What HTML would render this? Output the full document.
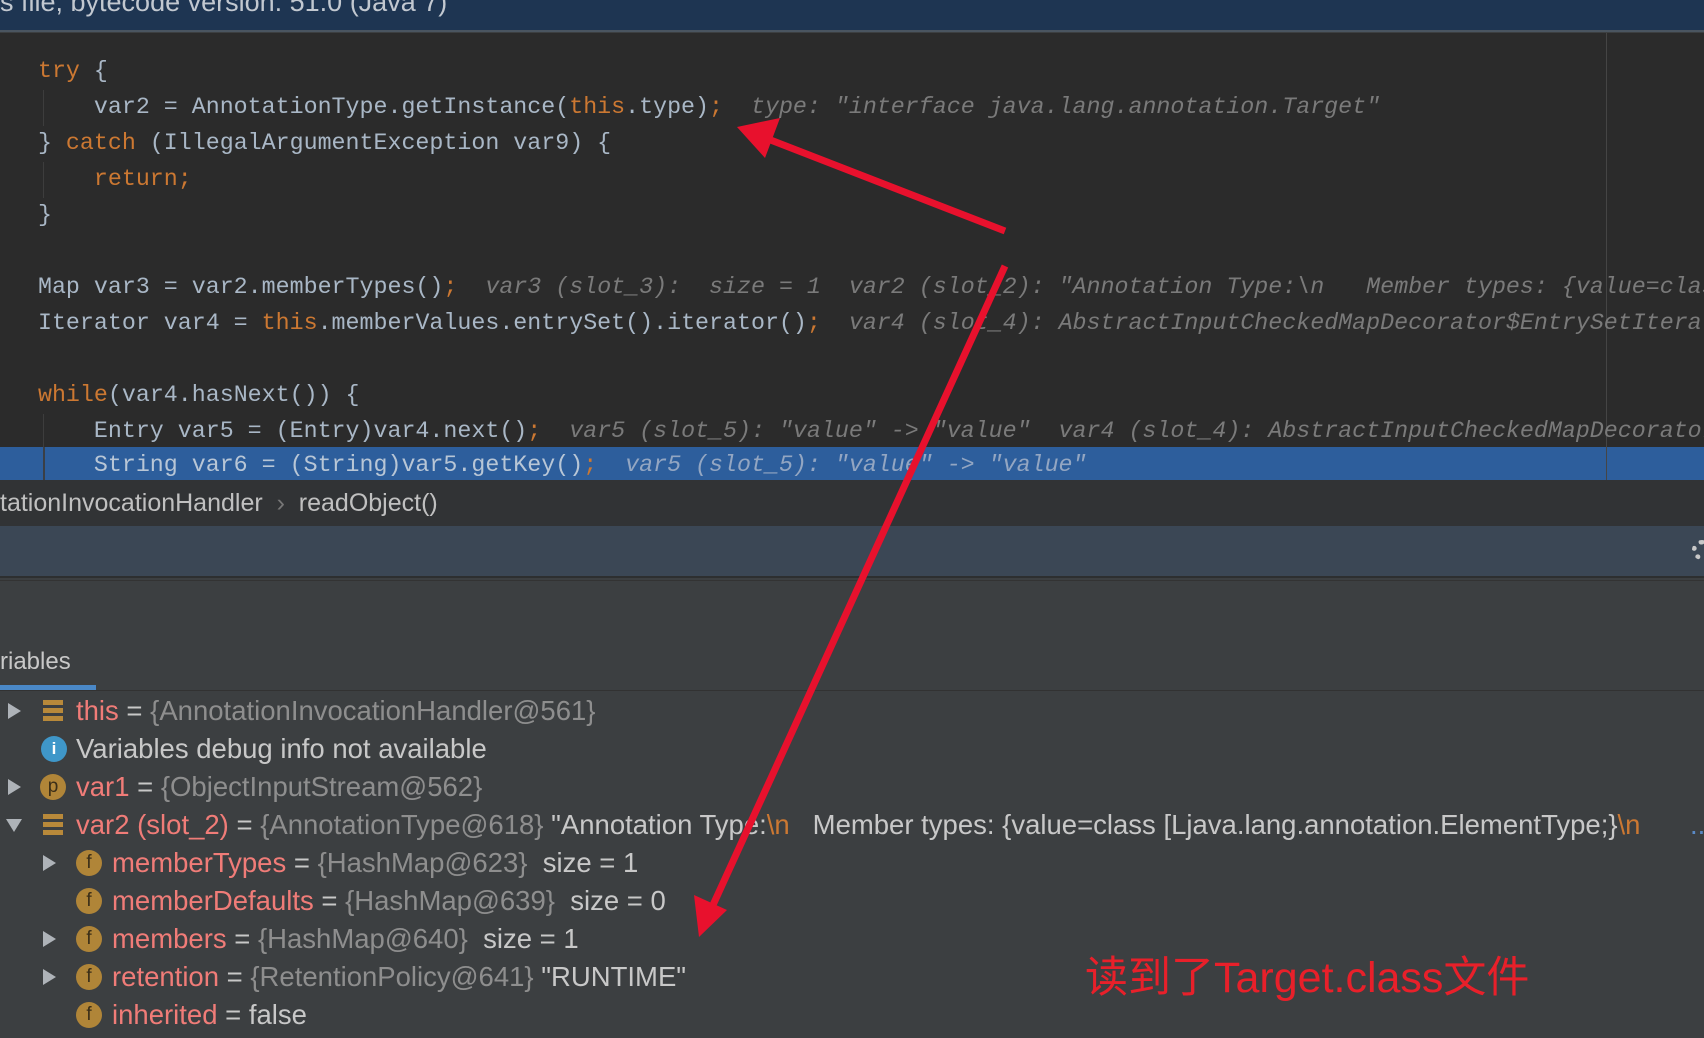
<!DOCTYPE html>
<html><head><meta charset="utf-8"><style>
*{margin:0;padding:0;box-sizing:border-box}
body{width:1704px;height:1038px;overflow:hidden;background:#3c3f41;position:relative;font-family:"Liberation Sans","Noto Sans CJK SC",sans-serif}
.abs{position:absolute}
#top{left:0;top:0;width:1704px;height:32px;background:#1e3552;border-bottom:2px solid #4a5560;overflow:hidden}
#top span{position:absolute;left:0;top:-13px;font-size:27px;color:#c2c8d0;white-space:pre}
#code{left:0;top:33px;width:1704px;height:447px;background:#2b2b2b;overflow:hidden}
.ln{position:absolute;left:10px;height:36px;line-height:36px;font-family:"Liberation Mono",monospace;font-size:23.3px;color:#a9b7c6;white-space:pre;width:1704px}
.k{color:#cc7832}.h{color:#7a7a7a;font-style:italic}
.guide{position:absolute;left:43px;width:1px;background:#3d3d3d}
#crumb{left:0;top:480px;width:1704px;height:46px;background:#313335;font-size:25px;color:#c0c0c0;line-height:46px;white-space:pre}
#tool{left:0;top:526px;width:1704px;height:52px;background:#3b4755;border-bottom:2px solid #2d2f30}
#tabs{left:0;top:580px;width:1704px;height:110px;background:#3c3f41;border-top:1px solid #333}
.row{position:absolute;height:38px;line-height:38px;font-size:27.5px;color:#c8c8c8;white-space:pre}
.n{color:#f07c78}.v{color:#8e8e8e}.o{color:#cc7832}
.tri{position:absolute;width:0;height:0;border-top:8px solid transparent;border-bottom:8px solid transparent;border-left:13px solid #aeb3b8}
.trid{position:absolute;width:0;height:0;border-left:8px solid transparent;border-right:8px solid transparent;border-top:13px solid #aeb3b8}
.ci{position:absolute;width:26px;height:26px;border-radius:50%;background:#b08538;color:#3a2e18;font-size:19px;line-height:26px;text-align:center}
.st{position:absolute;width:20px;height:22px;background:repeating-linear-gradient(#b8893a 0 5px,#3c3f41 5px 8px)}
</style></head><body>
<div id="top" class="abs"><span>s file, bytecode version: 51.0 (Java 7)</span></div>
<div id="code" class="abs">
<div class="guide" style="top:57px;height:36px"></div>
<div class="guide" style="top:129px;height:36px"></div>
<div class="guide" style="top:381px;height:66px"></div>
<div class="abs" style="left:0;top:414px;width:1704px;height:33px;background:#2d5e9c"></div>
<div class="abs" style="left:1606px;top:0;width:1px;height:447px;background:#454545"></div>
<div class="ln" style="top:20px">  <span class="k">try</span> {</div>
<div class="ln" style="top:56px">      var2 = AnnotationType.getInstance(<span class="k">this</span>.type)<span class="k">;</span>  <span class="h">type: "interface java.lang.annotation.Target"</span></div>
<div class="ln" style="top:92px">  } <span class="k">catch</span> (IllegalArgumentException var9) {</div>
<div class="ln" style="top:128px">      <span class="k">return;</span></div>
<div class="ln" style="top:164px">  }</div>
<div class="ln" style="top:236px">  Map var3 = var2.memberTypes()<span class="k">;</span>  <span class="h">var3 (slot_3):  size = 1  var2 (slot_2): "Annotation Type:\n   Member types: {value=class</span></div>
<div class="ln" style="top:272px">  Iterator var4 = <span class="k">this</span>.memberValues.entrySet().iterator()<span class="k">;</span>  <span class="h">var4 (slot_4): AbstractInputCheckedMapDecorator$EntrySetIterator</span></div>
<div class="ln" style="top:344px">  <span class="k">while</span>(var4.hasNext()) {</div>
<div class="ln" style="top:380px">      Entry var5 = (Entry)var4.next()<span class="k">;</span>  <span class="h">var5 (slot_5): "value" -> "value"  var4 (slot_4): AbstractInputCheckedMapDecorator</span></div>
<div class="ln" style="top:414px;color:#b8c6d6">      String var6 = (String)var5.getKey()<span class="k">;</span>  <span class="h" style="color:#93a6c2">var5 (slot_5): "value" -> "value"</span></div>
<div class="abs" style="left:43px;top:414px;width:2px;height:33px;background:#3a3f46"></div>
</div>
<div id="crumb" class="abs">tationInvocationHandler  <span style="color:#777">›</span>  readObject()</div>
<div id="tool" class="abs"><div class="abs" style="left:1692px;top:14px;width:20px;height:20px;border-radius:50%;border:5px dotted #c8c8c8"></div></div>
<div id="tabs" class="abs">
<div class="abs" style="left:0;top:67px;font-size:24px;color:#c8c8c8">riables</div>
<div class="abs" style="left:0;top:104px;width:96px;height:5px;background:#4a88c7"></div>
<div class="abs" style="left:0;top:109px;width:1704px;height:1px;background:#323232"></div>
</div>
<div class="tri" style="left:8px;top:703px"></div><div class="st" style="left:43px;top:700px"></div>
<div class="row" style="left:76px;top:692px"><span class="n">this</span> = <span class="v">{AnnotationInvocationHandler@561}</span></div>
<div class="ci" style="left:41px;top:736px;background:#3f97c9;color:#fff;font-weight:bold;font-size:17px">i</div>
<div class="row" style="left:76px;top:730px">Variables debug info not available</div>
<div class="tri" style="left:8px;top:779px"></div><div class="ci" style="left:40px;top:774px">p</div>
<div class="row" style="left:76px;top:768px"><span class="n">var1</span> = <span class="v">{ObjectInputStream@562}</span></div>
<div class="trid" style="left:6px;top:819px"></div><div class="st" style="left:43px;top:814px"></div>
<div class="row" style="left:76px;top:806px"><span class="n">var2 (slot_2)</span> = <span class="v">{AnnotationType@618}</span> "Annotation Type:<span class="o">\n</span>   Member types: {value=class [Ljava.lang.annotation.ElementType;}<span class="o">\n</span></div>
<div class="abs" style="left:1660px;top:806px;width:44px;height:38px;background:#3c3f41"></div>
<div class="row" style="left:1690px;top:806px;color:#5a8ac6">..</div>
<div class="tri" style="left:43px;top:855px"></div><div class="ci" style="left:76px;top:850px">f</div>
<div class="row" style="left:112px;top:844px"><span class="n">memberTypes</span> = <span class="v">{HashMap@623}</span>  size = 1</div>
<div class="ci" style="left:76px;top:888px">f</div>
<div class="row" style="left:112px;top:882px"><span class="n">memberDefaults</span> = <span class="v">{HashMap@639}</span>  size = 0</div>
<div class="tri" style="left:43px;top:931px"></div><div class="ci" style="left:76px;top:926px">f</div>
<div class="row" style="left:112px;top:920px"><span class="n">members</span> = <span class="v">{HashMap@640}</span>  size = 1</div>
<div class="tri" style="left:43px;top:969px"></div><div class="ci" style="left:76px;top:964px">f</div>
<div class="row" style="left:112px;top:958px"><span class="n">retention</span> = <span class="v">{RetentionPolicy@641}</span> "RUNTIME"</div>
<div class="ci" style="left:76px;top:1002px">f</div>
<div class="row" style="left:112px;top:996px"><span class="n">inherited</span> = false</div>
<div class="abs" style="left:1085px;top:943px;font-size:43px;color:#e8202a;white-space:pre">读到了Target.class文件</div>
<svg class="abs" style="left:0;top:0" width="1704" height="1038">
<line x1="1005" y1="231" x2="768" y2="139" stroke="#e8112d" stroke-width="7"/>
<polygon points="737,127 780,118 765,158" fill="#e8112d"/>
<line x1="1005" y1="266" x2="713" y2="905" stroke="#e8112d" stroke-width="7"/>
<polygon points="699,937 694,895 727,910" fill="#e8112d"/>
</svg>
</body></html>
